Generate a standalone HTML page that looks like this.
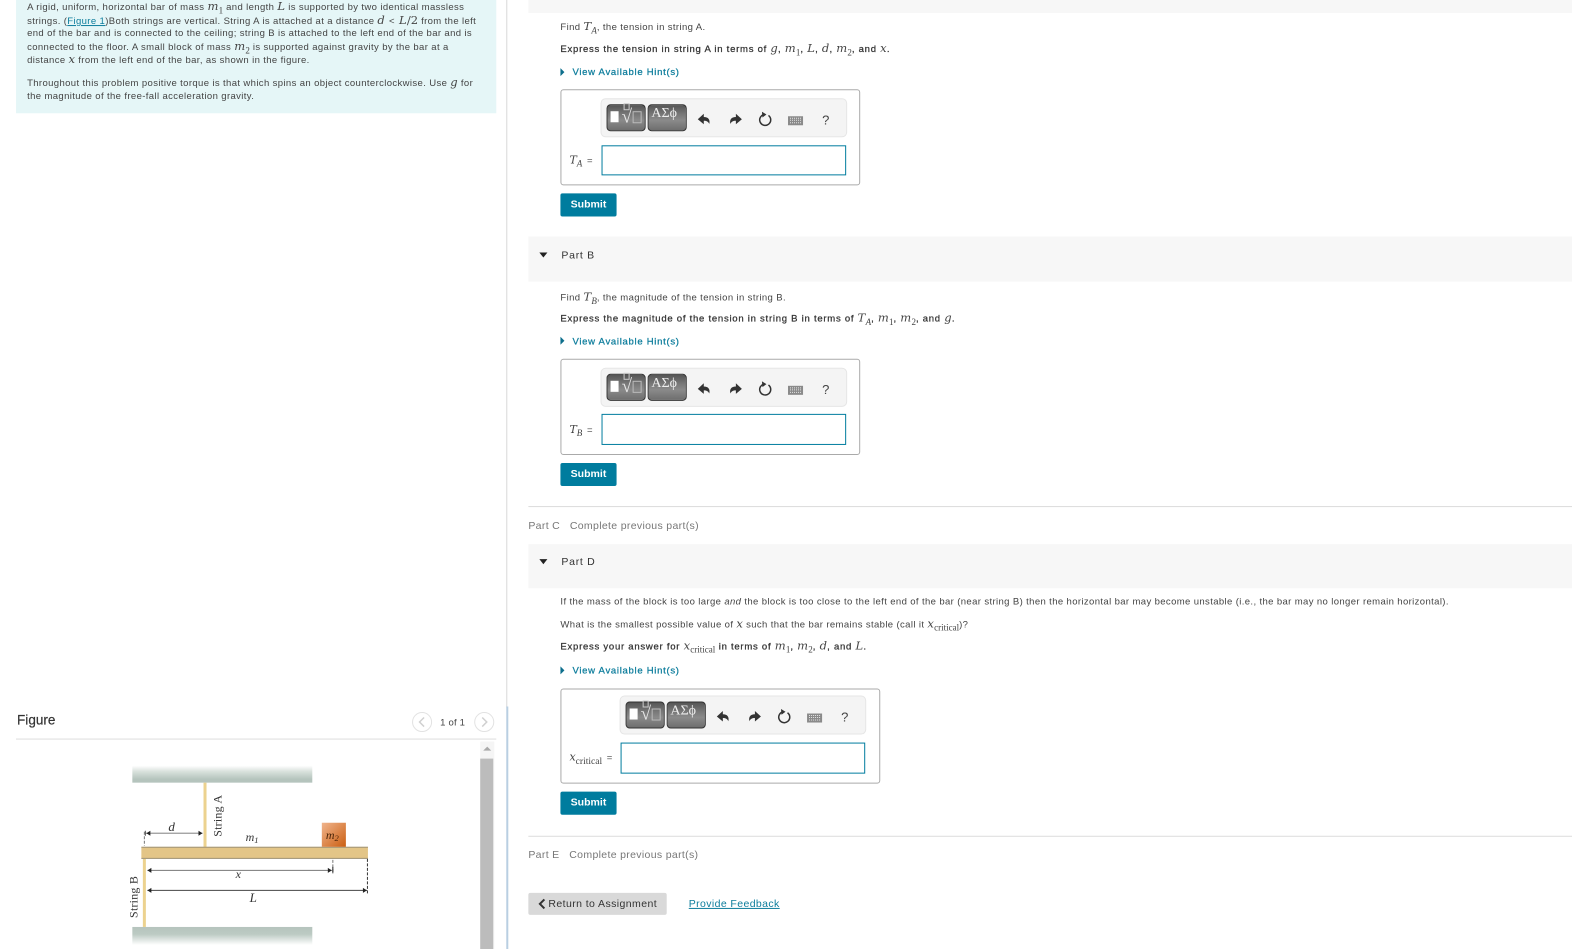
<!DOCTYPE html>
<html lang="en"><head><meta charset="utf-8"><title>Problem</title>
<style>
html,body{margin:0;padding:0;background:#fff;overflow:hidden}
body{width:1572px;height:947px;font-family:"Liberation Sans",Arial,sans-serif;font-size:9.5px;color:#444}
#w{position:absolute;left:0;top:0;width:1572px;height:947px;transform-origin:0 0;transform:scale(1.00255,1.00212)}
.a{position:absolute}
.t{position:absolute;white-space:nowrap;line-height:14px;height:14px;letter-spacing:.37px}
.b{color:#333;letter-spacing:.74px;-webkit-text-stroke:.25px #333}
i.m{font-family:"DejaVu Serif",serif;font-style:italic;font-size:11.5px;letter-spacing:.2px;color:#444;-webkit-text-stroke:0}
sub{font-family:"Liberation Serif",serif;font-size:9px;line-height:0;font-style:italic;letter-spacing:0}
sub.n{font-style:normal}
.hint{color:#0d7d9c;letter-spacing:.7px;-webkit-text-stroke:.25px #0d7d9c}
.tri{position:absolute;width:0;height:0;border-left:4px solid #0d6e8c;border-top:4px solid transparent;border-bottom:4px solid transparent}
.down{position:absolute;width:0;height:0;border-top:5px solid #222;border-left:4.5px solid transparent;border-right:4.5px solid transparent}
.band{position:absolute;left:527px;right:-10px;background:#f7f7f7}
.part{font-size:10.5px;color:#333;letter-spacing:.7px}
.gray{font-size:10.5px;color:#777;letter-spacing:.32px}
.box{position:absolute;border:1px solid #aaa;border-radius:3px;box-sizing:border-box;background:#fff}
.tb{position:absolute;width:246px;height:39px;background:#f4f4f4;border:1px solid #e6e6e6;border-radius:5px;box-sizing:border-box}
.btn{position:absolute;top:5px;height:27px;box-sizing:border-box;border:1px solid #333;border-radius:4px;background:linear-gradient(#555,#777 35%,#8a8a8a 60%,#6e6e6e)}
.inp{position:absolute;box-sizing:border-box;border:1px solid #007c9e;background:#fff;height:30px;width:244px}
.sub{position:absolute;width:56px;height:23px;background:#007c9e;border-radius:2px;color:#fff;font-weight:700;font-size:10.5px;line-height:23px;text-align:center}
.lab{position:absolute;white-space:nowrap;font-family:"DejaVu Serif",serif;font-style:italic;font-size:11px;color:#444}
.eq{font-style:normal;font-family:'Liberation Sans';font-size:9.5px;margin-left:2px}
.root{position:absolute;left:14px;top:0;color:#e5e5e5;font:19px/24px 'Liberation Serif',serif}
.sm{position:absolute;left:16px;top:-2px;width:4px;height:5px;border:1px solid #ccc}
.bx{position:absolute;left:25px;top:6px;width:7px;height:10px;border:1px solid #bbb}
.wh{position:absolute;left:3px;top:6px;width:8px;height:11px;background:#fff}
.gk{left:46px;width:39px;padding-right:6px;color:#eee;font:14px/17px 'Liberation Serif',serif;text-align:center}
</style></head><body><div id="w">

<!-- left problem panel -->
<div class="a" style="left:16px;top:0;width:479px;height:113px;background:#e5f6f7"></div>
<div class="t" style="left:27px;top:-1.500px">A rigid, uniform, horizontal bar of mass <i class="m">m<sub class="n">1</sub></i> and length <i class="m">L</i> is supported by two identical massless</div>
<div class="t" style="left:27px;top:13px">strings. (<span style="color:#0d7d9c;text-decoration:underline">Figure 1</span>)Both strings are vertical. String A is attached at a distance <i class="m">d</i> <span style="margin:0 1px">&lt;</span> <i class="m">L</i><span style="font-family:'DejaVu Serif';font-size:11.5px;letter-spacing:0">/2</span> from the left</div>
<div class="t" style="left:27px;top:26.500px">end of the bar and is connected to the ceiling; string B is attached to the left end of the bar and is</div>
<div class="t" style="left:27px;top:38.500px">connected to the floor. A small block of mass <i class="m">m<sub class="n">2</sub></i> is supported against gravity by the bar at a</div>
<div class="t" style="left:27px;top:51.500px">distance <i class="m">x</i> from the left end of the bar, as shown in the figure.</div>
<div class="t" style="left:27px;top:74.500px">Throughout this problem positive torque is that which spins an object counterclockwise. Use <i class="m">g</i> for</div>
<div class="t" style="left:27px;top:89.500px">the magnitude of the free-fall acceleration gravity.</div>

<!-- separator -->
<div class="a" style="left:505px;top:0;width:1px;height:706px;background:#d8d8d8"></div>
<div class="a" style="left:504.5px;top:705px;width:2px;height:242px;background:#b9cfe2"></div>

<!-- figure header -->
<div class="a" style="left:17px;top:711px;font-size:13.5px;line-height:16px;color:#333;-webkit-text-stroke:.2px #333">Figure</div>
<div class="a" style="left:16px;top:737px;width:479px;height:1px;background:#dcdcdc"></div>
<svg class="a" style="left:410px;top:710px" width="85" height="22" viewBox="0 0 85 22">
<circle cx="11" cy="10.500" r="9.500" fill="#fff" stroke="#e2e2e2"/><path d="M13 6l-4.500 4.500L13 15" fill="none" stroke="#d0d0d0" stroke-width="1.500"/>
<circle cx="73" cy="10.500" r="9.500" fill="#fff" stroke="#e2e2e2"/><path d="M71 6l4.500 4.500L71 15" fill="none" stroke="#d0d0d0" stroke-width="1.500"/>
</svg>
<div class="a" style="left:439px;top:715px;font-size:9.5px;line-height:14px;color:#444;letter-spacing:.2px">1 of 1</div>
<!-- scrollbar -->
<div class="a" style="left:479px;top:740px;width:14px;height:207px;background:#f5f5f5"></div>
<div class="a" style="left:479px;top:757px;width:13px;height:190px;background:#bcbcbc"></div>
<div class="a" style="left:482px;top:745px;width:0;height:0;border-bottom:4px solid #aaa;border-left:4px solid transparent;border-right:4px solid transparent"></div>

<!-- figure -->
<svg class="a" style="left:120px;top:760px" width="260" height="187" viewBox="0 0 260 187">
<defs>
<linearGradient id="c" x1="0" y1="0" x2="0" y2="1"><stop offset="0" stop-color="#fff"/><stop offset=".35" stop-color="#d8e1dc"/><stop offset=".8" stop-color="#b5c4bd"/><stop offset="1" stop-color="#b5c4bd"/></linearGradient>
<linearGradient id="f" x1="0" y1="0" x2="0" y2="1"><stop offset="0" stop-color="#b5c4bd"/><stop offset=".4" stop-color="#bccac3"/><stop offset="1" stop-color="#fff"/></linearGradient>
<linearGradient id="bk" x1="0" y1="0" x2="1" y2="1"><stop offset="0" stop-color="#f0b48c"/><stop offset="1" stop-color="#cb5f12"/></linearGradient>
</defs>
<rect x="12" y="4" width="179.500" height="17" fill="url(#c)"/>
<rect x="12" y="165" width="179.500" height="18" fill="url(#f)"/>
<rect x="83" y="21" width="3" height="65" fill="#ecd28f"/>
<rect x="22.500" y="97" width="3" height="68" fill="#ecd28f"/>
<rect x="21" y="85" width="226" height="12" fill="#e3c587"/>
<path d="M21 85.500H247M21 96.500H247" stroke="#8d8672" stroke-width="1" opacity=".8"/>
<rect x="201" y="61" width="24" height="24" fill="url(#bk)"/>
<path d="M24 70v14" stroke="#777" stroke-dasharray="3 1.500"/>
<path d="M25 71.500h57" stroke="#999" stroke-width="1.200"/>
<path d="M26 71.500l4-2.500v5zM82 71.500l-4-2.500v5z" fill="#222"/>
<path d="M25 69v5" stroke="#555"/>
<path d="M212 98v14" stroke="#777" stroke-dasharray="3 1.500"/>
<path d="M27 108.500h184" stroke="#777" stroke-width="1"/>
<path d="M27 108.500l4-2.500v5zM211 108.500l-4-2.500v5z" fill="#222"/>
<path d="M212 105v6" stroke="#222"/>
<path d="M246.500 97v36" stroke="#333" stroke-dasharray="3 1.500"/>
<path d="M27 128.500h219" stroke="#444" stroke-width="1"/>
<path d="M27 128.500l4-2.500v5zM246 128.500l-4-2.500v5z" fill="#222"/>
<g font-family="Liberation Serif,serif" fill="#333" font-size="12">
<text x="48" y="69" font-style="italic" font-size="13">d</text>
<text x="125" y="79" font-style="italic">m<tspan font-size="8.500" dy="2">1</tspan></text>
<text x="205" y="77" font-style="italic" fill="#4a2408">m<tspan font-size="8.500" dy="2">2</tspan></text>
<text x="115" y="116" font-style="italic">x</text>
<text x="129" y="140" font-style="italic" font-size="13">L</text>
<text transform="translate(101,75) rotate(-90)" font-size="12" letter-spacing=".2">String A</text>
<text transform="translate(17,156) rotate(-90)" font-size="12" letter-spacing=".2">String B</text>
</g>
</svg>

<!-- right column -->
<div class="band" style="top:0;height:13px"></div>

<!-- Part A content -->
<div class="t" style="left:559px;top:19px">Find <i class="m">T<sub>A</sub></i>, the tension in string A.</div>
<div class="t b" style="left:559px;top:40.500px">Express the tension in string A in terms of <i class="m">g</i>, <i class="m">m<sub class="n">1</sub></i>, <i class="m">L</i>, <i class="m">d</i>, <i class="m">m<sub class="n">2</sub></i>, and <i class="m">x</i>.</div>
<div class="tri" style="left:559px;top:68px"></div>
<div class="t hint" style="left:571px;top:66px">View Available Hint(s)</div>

<div class="box" style="left:559px;top:89px;width:299px;height:96px"></div>
<div class="tb" style="left:599px;top:98px">
 <div class="btn" style="left:5px;width:39px"><div class="wh"></div><div class="root">√</div><div class="sm"></div><div class="bx"></div></div>
 <div class="btn gk">ΑΣϕ</div>
 <svg class="a" style="left:90px;top:4px" width="150" height="30" viewBox="0 0 150 30">
 <path d="M6 16l6-5.500v3.200c4.500 0 6.500 2.500 5.500 7-1-2.300-2.800-3.200-5.500-3.200v3.500z" fill="#333"/>
 <path d="M50 16l-6-5.500v3.200c-4.500 0-6.500 2.500-5.500 7 1-2.300 2.800-3.200 5.500-3.200v3.500z" fill="#333"/>
 <path d="M72.500 11.200a5.500 5.500 0 1 0 4 1" fill="none" stroke="#333" stroke-width="1.500"/><path d="M70 8.500l4.500 2.800-4 3z" fill="#333"/>
 <rect x="96" y="13" width="15" height="9" fill="#8a8a8a"/><path d="M98 15h11M98 17h11M98 19.500h11" stroke="#e5e5e5" stroke-dasharray="1 1"/>
 <text x="130" y="21" font-family="Liberation Sans,sans-serif" font-size="13" fill="#444">?</text>
 </svg>
</div>
<div class="lab" style="left:568px;top:152.500px">T<sub>A</sub><span class="eq"> =</span></div>
<div class="inp" style="left:600px;top:145px"></div>
<div class="sub" style="left:559px;top:193px">Submit</div>

<!-- Part B -->
<div class="band" style="top:236px;height:45px"></div>
<div class="down" style="left:538px;top:252px"></div>
<div class="t part" style="left:560px;top:248px">Part B</div>
<div class="t" style="left:559px;top:288.500px">Find <i class="m">T<sub>B</sub></i>, the magnitude of the tension in string B.</div>
<div class="t b" style="left:559px;top:309.500px">Express the magnitude of the tension in string B in terms of <i class="m">T<sub>A</sub></i>, <i class="m">m<sub class="n">1</sub></i>, <i class="m">m<sub class="n">2</sub></i>, and <i class="m">g</i>.</div>
<div class="tri" style="left:559px;top:336px"></div>
<div class="t hint" style="left:571px;top:335px">View Available Hint(s)</div>

<div class="box" style="left:559px;top:358px;width:299px;height:96px"></div>
<div class="tb" style="left:599px;top:367px">
 <div class="btn" style="left:5px;width:39px"><div class="wh"></div><div class="root">√</div><div class="sm"></div><div class="bx"></div></div>
 <div class="btn gk">ΑΣϕ</div>
 <svg class="a" style="left:90px;top:4px" width="150" height="30" viewBox="0 0 150 30">
 <path d="M6 16l6-5.500v3.200c4.500 0 6.500 2.500 5.500 7-1-2.300-2.800-3.200-5.500-3.200v3.500z" fill="#333"/>
 <path d="M50 16l-6-5.500v3.200c-4.500 0-6.500 2.500-5.500 7 1-2.300 2.800-3.200 5.500-3.200v3.500z" fill="#333"/>
 <path d="M72.500 11.200a5.500 5.500 0 1 0 4 1" fill="none" stroke="#333" stroke-width="1.500"/><path d="M70 8.500l4.500 2.800-4 3z" fill="#333"/>
 <rect x="96" y="13" width="15" height="9" fill="#8a8a8a"/><path d="M98 15h11M98 17h11M98 19.500h11" stroke="#e5e5e5" stroke-dasharray="1 1"/>
 <text x="130" y="21" font-family="Liberation Sans,sans-serif" font-size="13" fill="#444">?</text>
 </svg>
</div>
<div class="lab" style="left:568px;top:421.500px">T<sub>B</sub><span class="eq"> =</span></div>
<div class="inp" style="left:600px;top:413px;height:31px"></div>
<div class="sub" style="left:559px;top:462px">Submit</div>

<!-- Part C -->
<div class="a" style="left:527px;right:-10px;top:505px;height:1px;background:#dcdcdc"></div>
<div class="t gray" style="left:527px;top:518px">Part C&nbsp;&nbsp; Complete previous part(s)</div>

<!-- Part D -->
<div class="band" style="top:543px;height:44px"></div>
<div class="down" style="left:538px;top:558px"></div>
<div class="t part" style="left:560px;top:554px">Part D</div>
<div class="t" style="left:559px;top:593.500px">If the mass of the block is too large <i>and</i> the block is too close to the left end of the bar (near string B) then the horizontal bar may become unstable (i.e., the bar may no longer remain horizontal).</div>
<div class="t" style="left:559px;top:614.500px">What is the smallest possible value of <i class="m">x</i> such that the bar remains stable (call it <i class="m">x<sub class="n">critical</sub></i>)?</div>
<div class="t b" style="left:559px;top:637px">Express your answer for <i class="m">x<sub class="n">critical</sub></i> in terms of <i class="m">m<sub class="n">1</sub></i>, <i class="m">m<sub class="n">2</sub></i>, <i class="m">d</i>, and <i class="m">L</i>.</div>
<div class="tri" style="left:559px;top:665px"></div>
<div class="t hint" style="left:571px;top:663px">View Available Hint(s)</div>

<div class="box" style="left:559px;top:687px;width:319px;height:95px"></div>
<div class="tb" style="left:618px;top:694px">
 <div class="btn" style="left:5px;width:39px"><div class="wh"></div><div class="root">√</div><div class="sm"></div><div class="bx"></div></div>
 <div class="btn gk">ΑΣϕ</div>
 <svg class="a" style="left:90px;top:4px" width="150" height="30" viewBox="0 0 150 30">
 <path d="M6 16l6-5.500v3.200c4.500 0 6.500 2.500 5.500 7-1-2.300-2.800-3.200-5.500-3.200v3.500z" fill="#333"/>
 <path d="M50 16l-6-5.500v3.200c-4.500 0-6.500 2.500-5.500 7 1-2.300 2.800-3.200 5.500-3.200v3.500z" fill="#333"/>
 <path d="M72.500 11.200a5.500 5.500 0 1 0 4 1" fill="none" stroke="#333" stroke-width="1.500"/><path d="M70 8.500l4.500 2.800-4 3z" fill="#333"/>
 <rect x="96" y="13" width="15" height="9" fill="#8a8a8a"/><path d="M98 15h11M98 17h11M98 19.500h11" stroke="#e5e5e5" stroke-dasharray="1 1"/>
 <text x="130" y="21" font-family="Liberation Sans,sans-serif" font-size="13" fill="#444">?</text>
 </svg>
</div>
<div class="lab" style="left:568px;top:749px">x<sub class="n" style="font-size:9.500px">critical</sub><span class="eq"> =</span></div>
<div class="inp" style="left:619px;top:741px;height:31px"></div>
<div class="sub" style="left:559px;top:790px">Submit</div>

<!-- Part E -->
<div class="a" style="left:527px;right:-10px;top:834px;height:1px;background:#dcdcdc"></div>
<div class="t gray" style="left:527px;top:846px">Part E&nbsp;&nbsp; Complete previous part(s)</div>

<!-- footer -->
<div class="a" style="left:527px;top:891px;width:138px;height:22px;background:#d9d9d9;border-radius:2px"></div>
<svg class="a" style="left:536px;top:896px" width="10" height="12" viewBox="0 0 10 12"><path d="M7 1.500L2.500 6 7 10.500" fill="none" stroke="#333" stroke-width="2"/></svg>
<div class="t" style="left:547px;top:895px;font-size:10.5px;color:#333;letter-spacing:.4px">Return to Assignment</div>
<div class="t" style="left:687px;top:895px;font-size:10.5px;color:#0d7d9c;text-decoration:underline;letter-spacing:.38px">Provide Feedback</div>
</div></body></html>
